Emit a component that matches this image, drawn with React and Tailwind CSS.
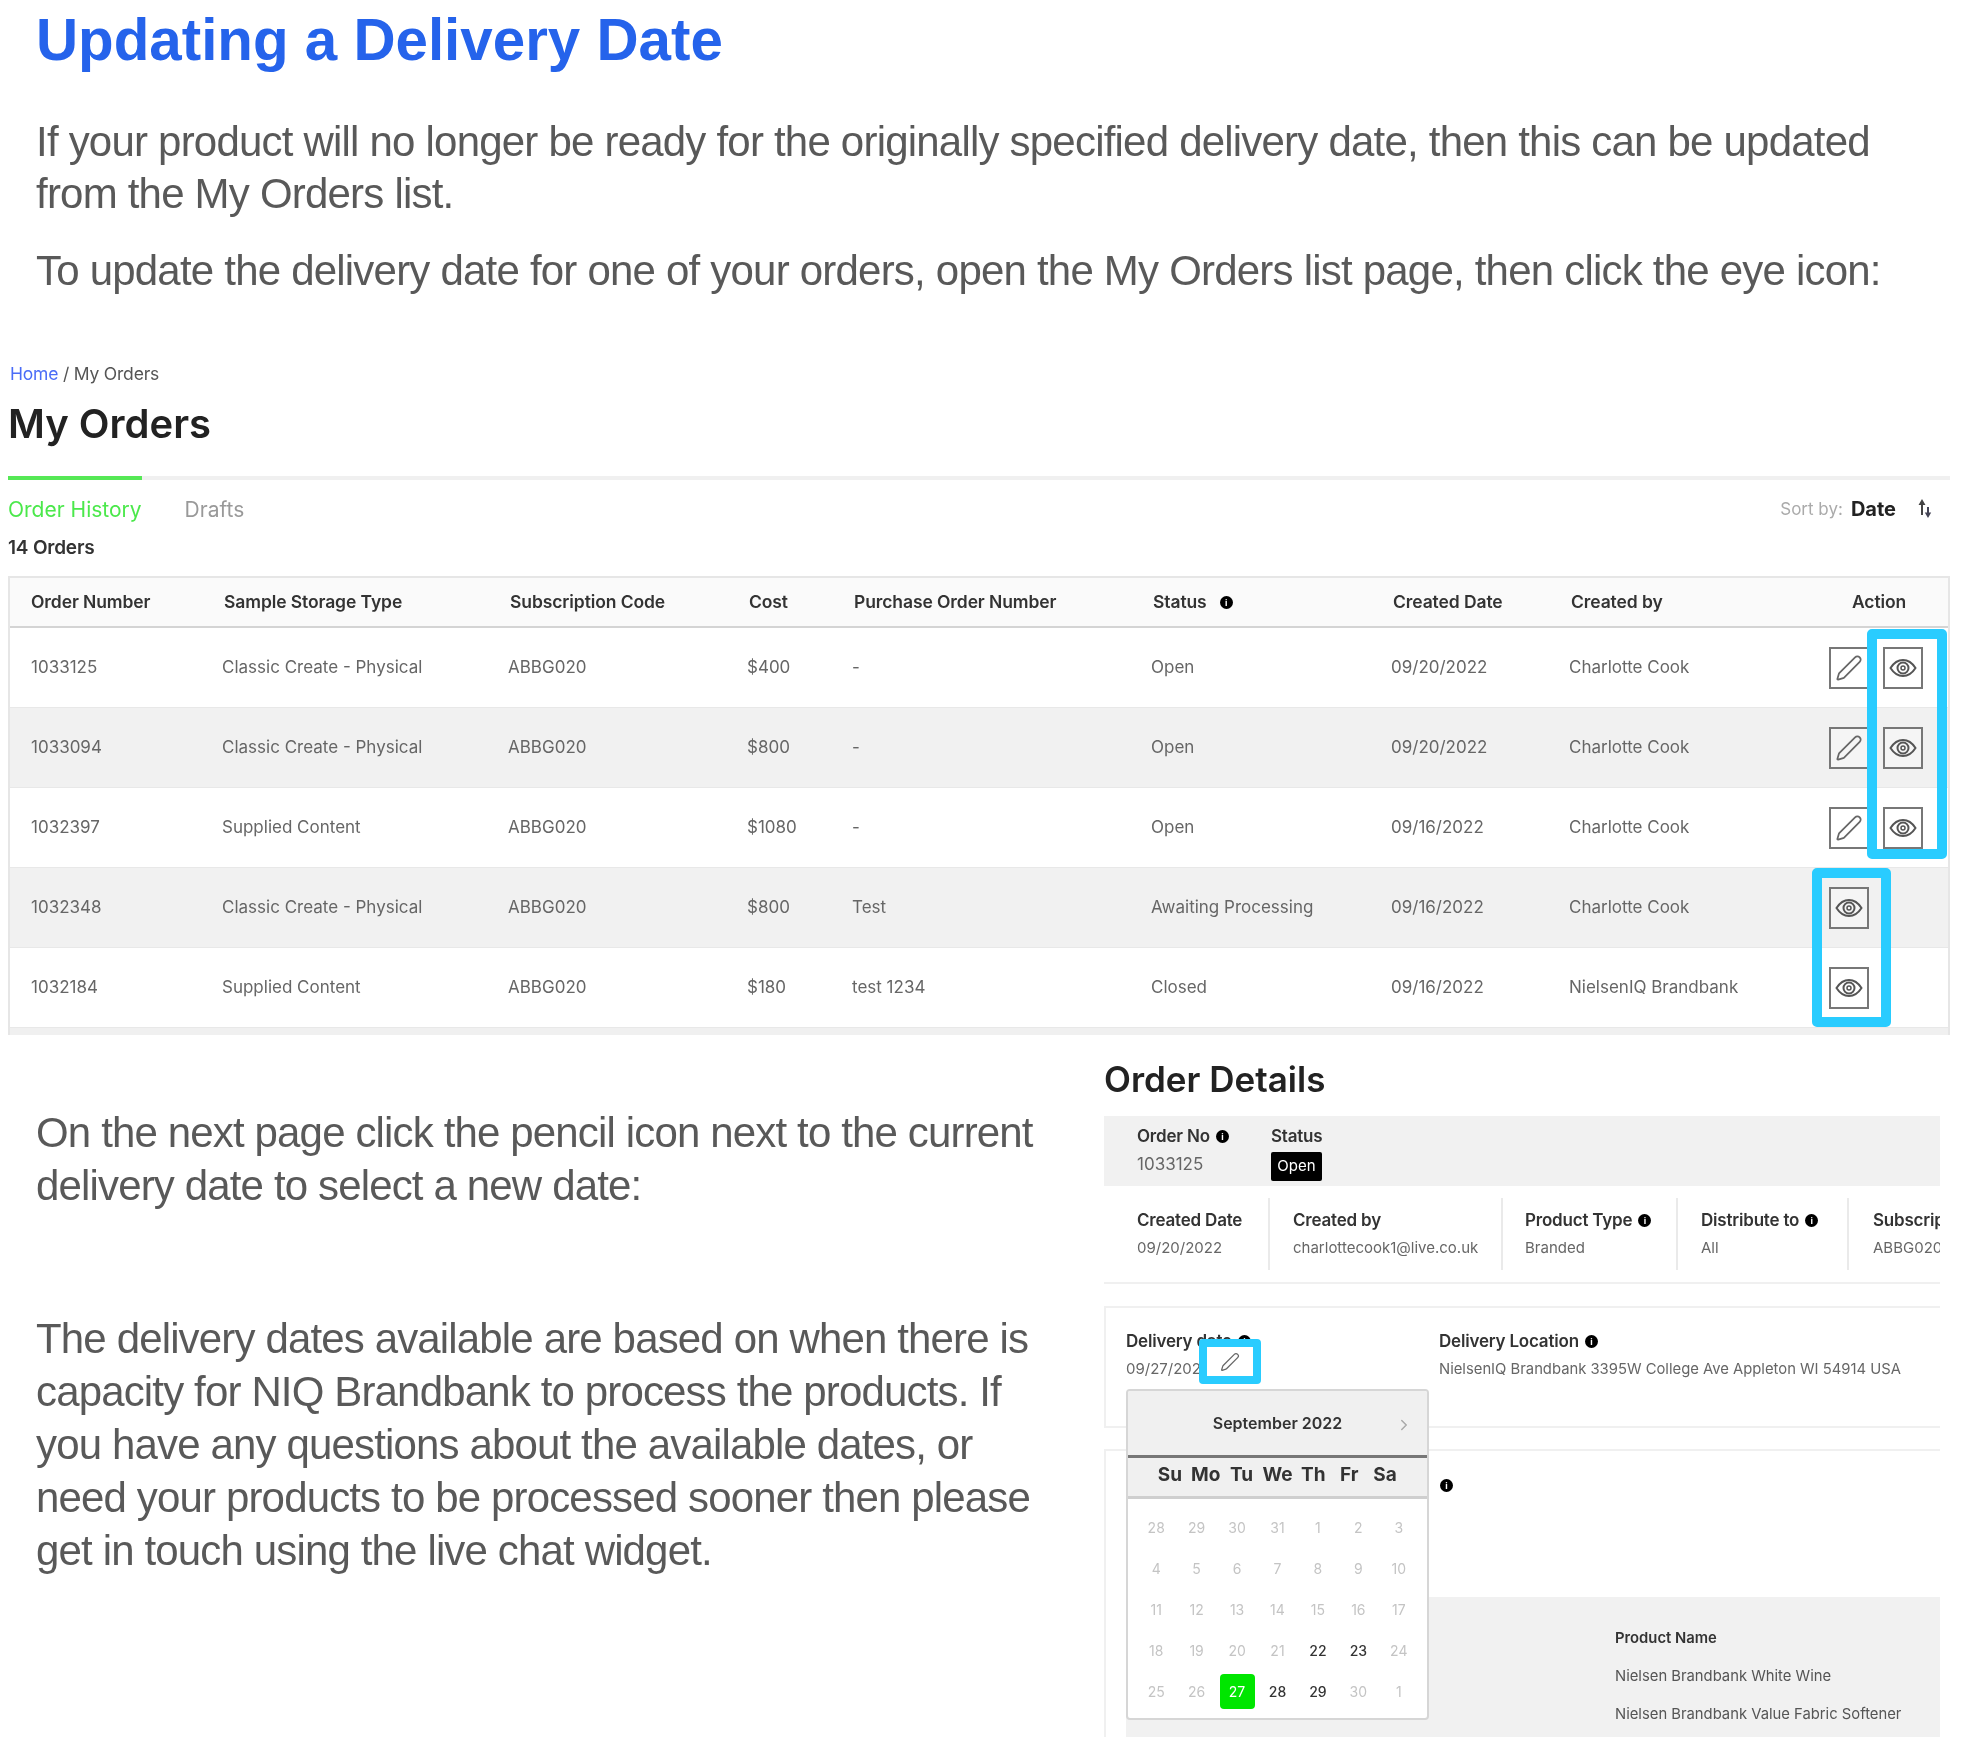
import { Pen, ChevronRight } from 'lucide-react';

const rows = [
  { id: '1033125', type: 'Classic Create - Physical', code: 'ABBG020', cost: '$400', po: '-', status: 'Open', date: '09/20/2022', by: 'Charlotte Cook', edit: true },
  { id: '1033094', type: 'Classic Create - Physical', code: 'ABBG020', cost: '$800', po: '-', status: 'Open', date: '09/20/2022', by: 'Charlotte Cook', edit: true, grey: true },
  { id: '1032397', type: 'Supplied Content', code: 'ABBG020', cost: '$1080', po: '-', status: 'Open', date: '09/16/2022', by: 'Charlotte Cook', edit: true },
  { id: '1032348', type: 'Classic Create - Physical', code: 'ABBG020', cost: '$800', po: 'Test', status: 'Awaiting Processing', date: '09/16/2022', by: 'Charlotte Cook', grey: true },
  { id: '1032184', type: 'Supplied Content', code: 'ABBG020', cost: '$180', po: 'test 1234', status: 'Closed', date: '09/16/2022', by: 'NielsenIQ Brandbank' },
];

const weeks = [
  ['28', '29', '30', '31', '1', '2', '3'],
  ['4', '5', '6', '7', '8', '9', '10'],
  ['11', '12', '13', '14', '15', '16', '17'],
  ['18', '19', '20', '21', '22', '23', '24'],
  ['25', '26', '27', '28', '29', '30', '1'],
];
const activeDays = ['22', '23', '28', '29'];

function InfoDot({ className = '' }) {
  return (
    <span className={`inline-flex h-[13px] w-[13px] items-center justify-center rounded-full bg-black text-[9px] font-bold leading-none text-white ${className}`}>
      i
    </span>
  );
}

function EyeIcon() {
  return (
    <svg width="30" height="30" viewBox="0 0 30 30" fill="none" stroke="#555" strokeWidth="2">
      <path d="M2.5 15C6 9.5 10 7 15 7s9 2.500 12.500 8C24 20.500 20 23 15 23S6 20.500 2.500 15Z" />
      <circle cx="15" cy="15" r="5.500" />
      <circle cx="15" cy="15" r="2" strokeWidth="1.500" />
    </svg>
  );
}

function ActionButton({ children }) {
  return (
    <div className="flex h-[42px] w-[40px] items-center justify-center border-2 border-[#777] bg-white/30">
      {children}
    </div>
  );
}

function Meta({ label, value, info, className = '', valueClass = 'text-[15px]' }) {
  return (
    <div className={className}>
      <div className="flex items-center gap-[6px] text-[17px] font-semibold tracking-[-0.2px] text-[#333]">
        {label}
        {info && <InfoDot />}
      </div>
      <div className={`mt-[3px] text-[#666] ${valueClass}`}>{value}</div>
    </div>
  );
}

function OrdersTable() {
  return (
    <div className="ml-2 mr-3 mt-[18px] h-[459px] border-x-2 border-t-2 border-[#e6e6e6] bg-[#f0f0f0]">
      <div className="grid h-[50px] grid-cols-[193px_286px_239px_105px_299px_240px_178px_260px_1fr] items-center border-b-2 border-[#d4d4d4] bg-[#fafafa] pl-[21px] text-[17.500px] font-semibold tracking-[-0.1px] text-[#333]">
        <span>Order Number</span>
        <span>Sample Storage Type</span>
        <span>Subscription Code</span>
        <span>Cost</span>
        <span>Purchase Order Number</span>
        <span className="flex items-center gap-[13px]">Status <InfoDot /></span>
        <span>Created Date</span>
        <span>Created by</span>
        <span className="pl-[21px]">Action</span>
      </div>
      <div className="relative">
        {rows.map((r) => (
          <div
            key={r.id}
            className={`grid h-[80px] grid-cols-[191px_286px_239px_105px_299px_240px_178px_260px_1fr] items-center border-b border-[#e8e8e8] pl-[21px] text-[17px] text-[#666] ${r.grey ? 'bg-[#f1f1f1]' : 'bg-white'}`}
          >
            <span>{r.id}</span>
            <span>{r.type}</span>
            <span>{r.code}</span>
            <span>{r.cost}</span>
            <span>{r.po}</span>
            <span>{r.status}</span>
            <span>{r.date}</span>
            <span>{r.by}</span>
            <div className="flex gap-[14px]">
              {r.edit && (
                <ActionButton>
                  <Pen size={28} strokeWidth={1.500} className="text-[#666]" />
                </ActionButton>
              )}
              <ActionButton>
                <EyeIcon />
              </ActionButton>
            </div>
          </div>
        ))}
        <div className="absolute left-[1857px] top-[1px] h-[230px] w-[80px] rounded-[5px] border-[10px] border-[#29ccff]" />
        <div className="absolute left-[1802px] top-[240px] h-[159px] w-[79px] rounded-[5px] border-[10px] border-[#29ccff]" />
      </div>
    </div>
  );
}

function Calendar() {
  return (
    <div className="absolute left-[22px] top-[331px] z-10 w-[303px] overflow-hidden rounded-[4px] border-2 border-[#d6d6d6] bg-white">
      <div className="relative flex h-[64px] items-center justify-center bg-[#f0f0f0] text-[16px] font-semibold text-[#333]">
        September 2022
        <ChevronRight size={18} className="absolute right-[14px] top-[25px] text-[#aaa]" />
      </div>
      <div className="grid h-[44px] grid-cols-7 border-y-[3px] border-t-[#777] border-b-[#cfcfcf] bg-[#f0f0f0] px-[24px] text-[19px] font-bold leading-[34px] text-[#333]">
        {['Su', 'Mo', 'Tu', 'We', 'Th', 'Fr', 'Sa'].map((d) => (
          <span key={d} className="text-center">{d}</span>
        ))}
      </div>
      <div className="grid grid-cols-7 px-[8px] pb-[6px] pt-[8px] text-[14px]">
        {weeks.flatMap((w, i) =>
          w.map((d, j) => {
            const selected = i === 4 && j === 2;
            const active = i >= 3 && activeDays.includes(d) && !(i === 3 && j < 4);
            return (
              <div key={`${i}-${j}`} className="flex h-[41px] items-center justify-center">
                <span className={`flex h-[35px] w-[35px] items-center justify-center rounded-[4px] ${selected ? 'bg-[#00e600] text-white' : active ? 'font-medium text-[#333]' : 'text-[#c4c4c4]'}`}>
                  {d}
                </span>
              </div>
            );
          })
        )}
      </div>
    </div>
  );
}

function OrderDetails() {
  return (
    <div className="relative w-[836px] overflow-hidden pb-[23px]">
      <h2 className="text-[35px] font-semibold leading-[42px] text-[#222]">Order Details</h2>
      <div className="mt-[16px] flex h-[70px] bg-[#f1f1f1] pl-[33px] pt-[8px]">
        <div className="w-[134px]">
          <div className="flex items-center gap-[6px] text-[17px] font-semibold tracking-[-0.2px] text-[#333]">Order No <InfoDot /></div>
          <div className="mt-[2px] text-[17px] text-[#666]">1033125</div>
        </div>
        <div>
          <div className="text-[17px] font-semibold tracking-[-0.2px] text-[#333]">Status</div>
          <div className="mt-[2px] flex h-[29px] w-[51px] items-center justify-center rounded-[2px] bg-black text-[15px] text-white">Open</div>
        </div>
      </div>
      <div className="flex h-[98px] items-center border-b-2 border-[#f0f0f0]">
        <Meta label="Created Date" value="09/20/2022" className="h-[72px] w-[166px] border-r-2 border-[#eaeaea] pl-[33px] pt-[10px]" />
        <Meta label="Created by" value="charlottecook1@live.co.uk" className="h-[72px] w-[233px] border-r-2 border-[#eaeaea] pl-[23px] pt-[10px]" />
        <Meta label="Product Type" value="Branded" info className="h-[72px] w-[175px] border-r-2 border-[#eaeaea] pl-[22px] pt-[10px]" />
        <Meta label="Distribute to" value="All" info className="h-[72px] w-[171px] border-r-2 border-[#eaeaea] pl-[23px] pt-[10px]" />
        <Meta label="Subscription Code" value="ABBG020" className="h-[72px] w-[91px] overflow-hidden whitespace-nowrap pl-[24px] pt-[10px]" />
      </div>
      <div className="mt-[22px] h-[122px] border-y-2 border-l-2 border-[#f0f0f0]">
        <div className="flex pl-[20px] pt-[21px]">
          <Meta label="Delivery date" value="09/27/2022" info className="w-[313px]" valueClass="text-[15px] -mt-[0px]" />
          <Meta label="Delivery Location" value="NielsenIQ Brandbank 3395W College Ave Appleton WI 54914 USA" info valueClass="text-[14.800px]" />
        </div>
      </div>
      <div className="mt-[21px] h-[288px] border-l-2 border-t-2 border-[#f0f0f0] pl-[20px]">
        <div className="flex h-[146px] pl-[314px] pt-[28px]">
          <InfoDot />
        </div>
        <div className="h-[140px] bg-[#f1f1f1] pl-[489px] pt-[30px] text-[14.800px] text-[#555]">
          <div className="font-semibold text-[#333]">Product Name</div>
          <div className="mt-[16px]">Nielsen Brandbank White Wine</div>
          <div className="mt-[16px]">Nielsen Brandbank Value Fabric Softener</div>
        </div>
      </div>
      <div className="absolute left-[95px] top-[281px] flex h-[45px] w-[62px] items-center justify-center rounded-[4px] border-[8px] border-[#29ccff] bg-white">
        <Pen size={20} strokeWidth={1.500} className="text-[#666]" />
      </div>
      <Calendar />
    </div>
  );
}

export default function App() {
  return (
    <div className="h-[1760px] w-[1962px] overflow-hidden bg-white font-['Inter',sans-serif] blur-[0.6px]">
      <div className="px-9 pt-[8px] font-['Liberation_Sans',sans-serif] text-[42px] leading-[52px] tracking-[-0.79px] text-[#595959]">
        <h1 className="text-[58.300px] font-bold leading-[64px] tracking-normal text-[#2563eb]">Updating a Delivery Date</h1>
        <p className="mt-[44px]">
          If your product will no longer be ready for the originally specified delivery date, then this can be updated
          <br />
          from the My Orders list.
        </p>
        <p className="mt-[25px]">To update the delivery date for one of your orders, open the My Orders list page, then click the eye icon:</p>
      </div>

      <div className="mt-[67px]">
        <div className="pl-[10px] text-[17.500px] leading-[20px] tracking-[-0.2px] text-[#555]">
          <span className="text-[#4a6cf7]">Home</span> / My Orders
        </div>
        <h2 className="mt-[16px] pl-2 text-[40px] font-semibold leading-[48px] text-[#222]">My Orders</h2>
        <div className="ml-2 mr-3 mt-[28px] h-[4px] bg-[#f0f0f0]">
          <div className="h-[4px] w-[134px] bg-[#55e855]" />
        </div>
        <div className="flex items-center justify-between px-2 pt-[16px] text-[21px] leading-[28px]">
          <div className="flex gap-[43px]">
            <span className="text-[#4be84b]">Order History</span>
            <span className="text-[#999]">Drafts</span>
          </div>
          <div className="-mt-[2px] flex items-center pr-[20px] text-[17px] text-[#aaa]">
            Sort by:
            <span className="ml-[8px] text-[20px] font-bold text-[#222]">Date</span>
            <svg className="ml-[20px]" width="18" height="24" viewBox="0 0 18 24">
              <path d="M6 2 L2.500 8 H5 V18 H7 V8 H9.500 Z" fill="#444" />
              <path d="M12 21 L8.800 15.500 H11 V10 H13 V15.500 H15.200 Z" fill="#445" />
            </svg>
          </div>
        </div>
        <div className="px-2 pt-[13px] text-[19px] font-semibold leading-[22px] tracking-[-0.2px] text-[#333]">14 Orders</div>
        <div className="-mt-[1px]">
          <OrdersTable />
        </div>
      </div>

      <div className="mt-[23px] flex">
        <div className="w-[1104px] pl-9 pr-[60px] pt-[48px] font-['Liberation_Sans',sans-serif] text-[42px] leading-[53px] tracking-[-0.85px] text-[#595959]">
          <p>On the next page click the pencil icon next to the current delivery date to select a new date:</p>
          <p className="mt-[100px]">
            The delivery dates available are based on when there is capacity for NIQ Brandbank to process the products. If you have any questions about the available dates, or need your products to be processed sooner then please get in touch using the live chat widget.
          </p>
        </div>
        <OrderDetails />
      </div>
    </div>
  );
}
